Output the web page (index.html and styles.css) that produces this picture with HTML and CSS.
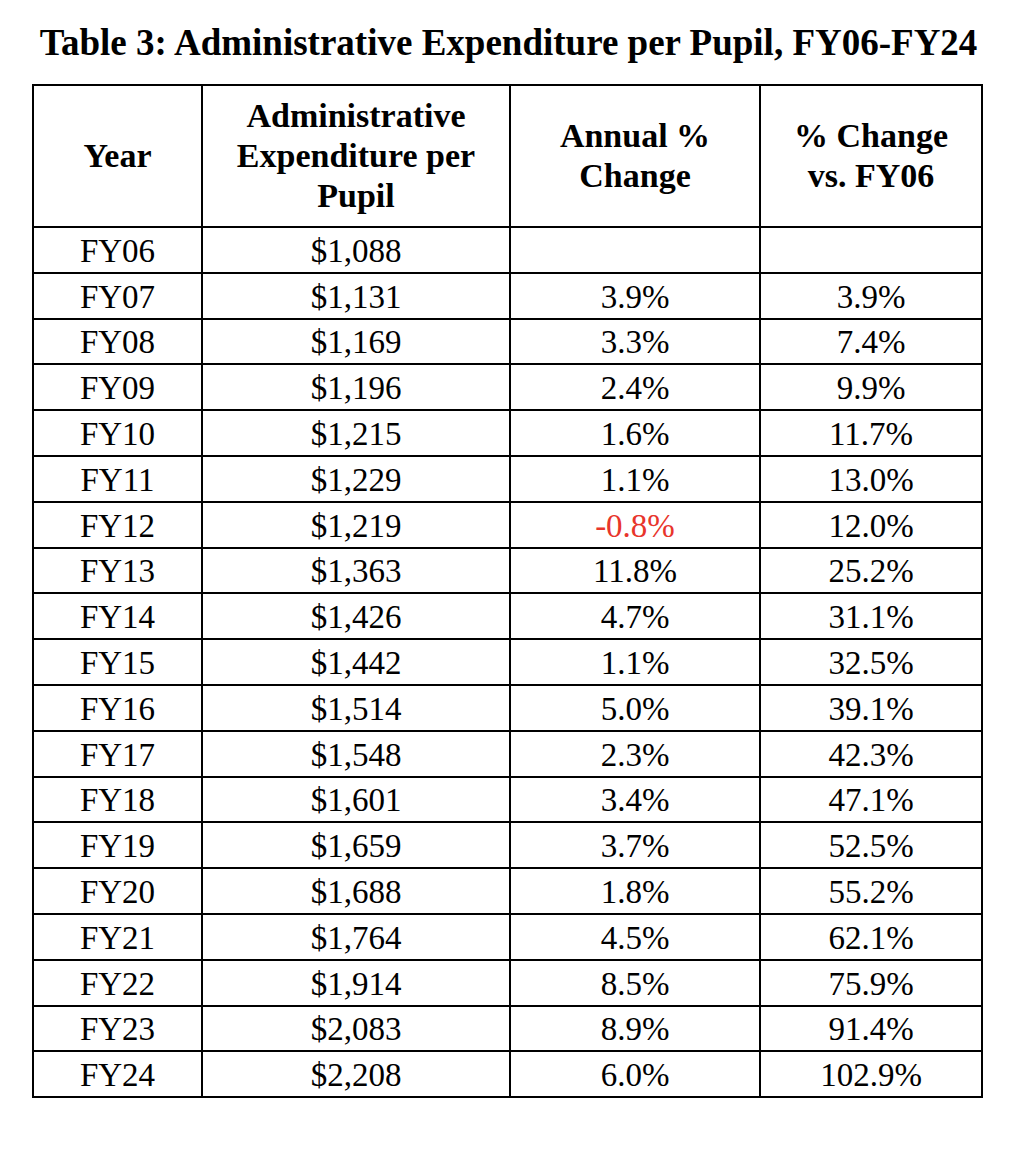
FILE: index.html
```html
<!DOCTYPE html>
<html lang="en">
<head>
    <meta charset="UTF-8">
    <title>Table 3: Administrative Expenditure per Pupil, FY06-FY24</title>
    <link rel="stylesheet" href="styles.css">
</head>
<body>
    <div class="container">
        <h1 class="title">Table 3: Administrative Expenditure per Pupil, FY06-FY24</h1>
        <table class="data-table">
            <colgroup>
                <col class="col-year">
                <col class="col-exp">
                <col class="col-annual">
                <col class="col-total">
            </colgroup>
            <thead>
                <tr>
                    <th>Year</th>
                    <th>Administrative Expenditure per Pupil</th>
                    <th>Annual %<br>Change</th>
                    <th>% Change<br>vs. FY06</th>
                </tr>
            </thead>
            <tbody>
                <tr><td>FY06</td><td>$1,088</td><td></td><td></td></tr>
                <tr><td>FY07</td><td>$1,131</td><td>3.9%</td><td>3.9%</td></tr>
                <tr><td>FY08</td><td>$1,169</td><td>3.3%</td><td>7.4%</td></tr>
                <tr><td>FY09</td><td>$1,196</td><td>2.4%</td><td>9.9%</td></tr>
                <tr><td>FY10</td><td>$1,215</td><td>1.6%</td><td>11.7%</td></tr>
                <tr><td>FY11</td><td>$1,229</td><td>1.1%</td><td>13.0%</td></tr>
                <tr><td>FY12</td><td>$1,219</td><td class="negative">-0.8%</td><td>12.0%</td></tr>
                <tr><td>FY13</td><td>$1,363</td><td>11.8%</td><td>25.2%</td></tr>
                <tr><td>FY14</td><td>$1,426</td><td>4.7%</td><td>31.1%</td></tr>
                <tr><td>FY15</td><td>$1,442</td><td>1.1%</td><td>32.5%</td></tr>
                <tr><td>FY16</td><td>$1,514</td><td>5.0%</td><td>39.1%</td></tr>
                <tr><td>FY17</td><td>$1,548</td><td>2.3%</td><td>42.3%</td></tr>
                <tr><td>FY18</td><td>$1,601</td><td>3.4%</td><td>47.1%</td></tr>
                <tr><td>FY19</td><td>$1,659</td><td>3.7%</td><td>52.5%</td></tr>
                <tr><td>FY20</td><td>$1,688</td><td>1.8%</td><td>55.2%</td></tr>
                <tr><td>FY21</td><td>$1,764</td><td>4.5%</td><td>62.1%</td></tr>
                <tr><td>FY22</td><td>$1,914</td><td>8.5%</td><td>75.9%</td></tr>
                <tr><td>FY23</td><td>$2,083</td><td>8.9%</td><td>91.4%</td></tr>
                <tr><td>FY24</td><td>$2,208</td><td>6.0%</td><td>102.9%</td></tr>
            </tbody>
        </table>
    </div>
</body>
</html>
```

FILE: styles.css
```css
body {
    font-family: "Liberation Serif", "Times New Roman", serif;
    background: #fff;
    color: #000;
    margin: 0;
    padding: 0;
}
.container {
    width: 949px;
    padding: 23px 0 0 32px;
}
.title {
    font-size: 37px;
    font-weight: bold;
    text-align: center;
    line-height: 40px;
    margin: 0 0 21px 0;
    padding-left: 4px;
    white-space: nowrap;
}
.data-table {
    width: 949px;
    border-collapse: collapse;
    border: 2px solid #000;
    table-layout: fixed;
}
.col-year { width: 169px; }
.col-exp { width: 308px; }
.col-annual { width: 250px; }
.col-total { width: 222px; }
.data-table th,
.data-table td {
    border: 2px solid #000;
    text-align: center;
    vertical-align: middle;
    padding: 0 6px;
}
.data-table th {
    font-size: 34px;
    font-weight: bold;
    line-height: 40px;
    height: 140px;
}
.data-table td {
    font-size: 33px;
    line-height: 36px;
    height: 41.8px;
    padding-top: 2px;
}
.data-table td.negative {
    color: #e8352b;
}
```
